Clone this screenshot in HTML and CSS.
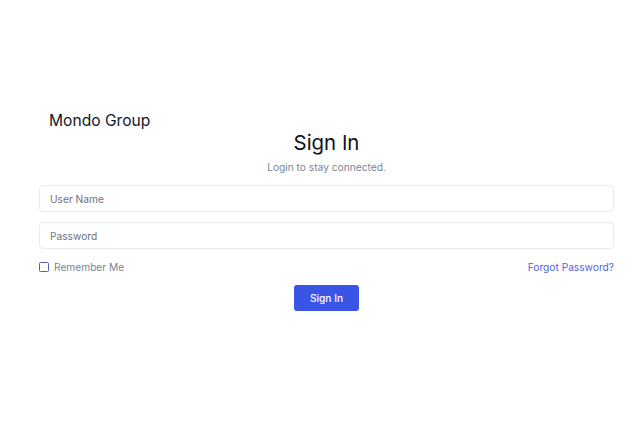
FILE: index.html
```html
<!DOCTYPE html>
<html>
<head>
<meta charset="utf-8">
<link rel="stylesheet" href="styles.css">
</head>
<body>
<main class="page">
  <div class="card">
    <div class="brand">Mondo Group</div>
    <h1 class="title">Sign In</h1>
    <p class="subtitle">Login to stay connected.</p>
    <form class="form">
      <input class="field" type="text" placeholder="User Name">
      <input class="field" type="password" placeholder="Password">
      <div class="row">
        <label class="remember"><span class="box"></span>Remember Me</label>
        <a class="forgot" href="#">Forgot Password?</a>
      </div>
      <div class="actions"><button class="btn" type="button">Sign In</button></div>
    </form>
  </div>
</main>
</body>
</html>
```
FILE: styles.css
```css
html, body { margin: 0; padding: 0; background: #fff; }
body { font-family: Inter, "Noto Sans", sans-serif; color: #0f172a; }
.page { padding: 111px 26px 0 39px; }
.card { display: flex; flex-direction: column; }
.brand { font-size: 15.6px; padding-left: 10px; line-height: 20px; color: #111827; }
.title { margin: 0; text-align: center; font-weight: 400; font-size: 20.4px; line-height: 24px; color: #0b1221; }
.subtitle { margin: 6px 0 12px; text-align: center; font-size: 10.2px; line-height: 12px; color: #7a8494; }
.form { display: flex; flex-direction: column; gap: 10px; }
.field { box-sizing: border-box; height: 27px; border: 1px solid #e9eaee; border-radius: 4px; padding: 0 10px; font: 10.2px Inter, sans-serif; color: #333; outline: none; }
.field::placeholder { color: #6b7280; }
.row { display: flex; justify-content: space-between; align-items: center; margin-top: 1px; font-size: 10.2px; line-height: 14px; }
.remember { display: flex; align-items: center; gap: 5px; color: #7c8493; }
.box { box-sizing: border-box; width: 10px; height: 10px; border: 1.5px solid #5561b4; border-radius: 1.5px; }
.forgot { color: #4f5fe0; text-decoration: none; }
.actions { display: flex; justify-content: center; margin-top: 1px; }
.btn { width: 65px; height: 26px; border: none; border-radius: 3px; background: #3a54e6; color: #fff; font: 500 10.2px Inter, sans-serif; }
```
